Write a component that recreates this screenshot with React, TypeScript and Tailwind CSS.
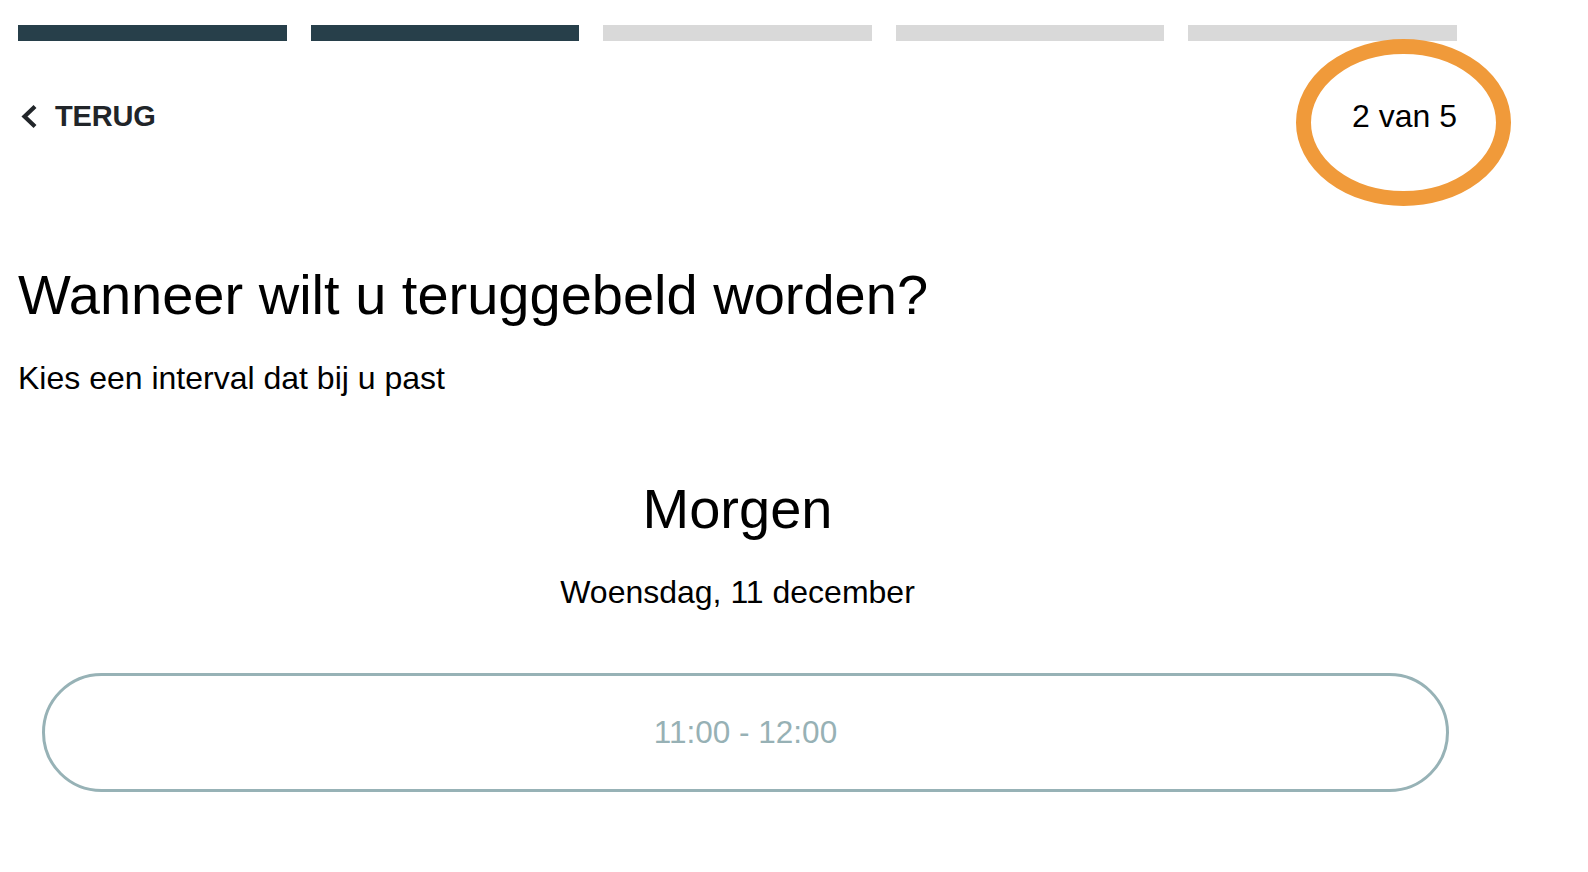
import React from "react";

export default function App() {
  const steps = [true, true, false, false, false];
  return (
    <div className="relative min-h-[872px] bg-white" style={{ fontFamily: '"Liberation Sans", Arial, sans-serif' }}>
      <div className="ml-[18px] w-[1439px] pt-[25px]">
        <div className="flex gap-[24px]">
          {steps.map((on, i) => (
            <div key={i} className={on ? "h-[16px] flex-1 bg-[#273f4a]" : "h-[16px] flex-1 bg-[#d9d9d9]"} />
          ))}
        </div>

        <div className="mt-[50px] flex h-[50px] items-center justify-between">
          <button className="flex items-center gap-[17px] pl-[3px] text-[#212529]">
            <svg width="17" height="25" viewBox="0 0 17 25" fill="none">
              <polyline points="14,2.5 3.5,12.5 14,22.5" stroke="#212529" strokeWidth="4.2" strokeLinecap="butt" strokeLinejoin="miter" />
            </svg>
            <span className="text-[29px] font-bold leading-none tracking-[-0.2px]">TERUG</span>
          </button>
          <span className="text-[32px] leading-none text-black">2 van 5</span>
        </div>

        <h1 className="mt-[126px] text-[56px] font-normal leading-none text-black">Wanneer wilt u teruggebeld worden?</h1>
        <p className="mt-[39px] text-[32px] leading-none text-black">Kies een interval dat bij u past</p>

        <div className="mt-[87px] text-center text-[56px] leading-none text-black">Morgen</div>
        <div className="mt-[39px] text-center text-[32px] leading-none text-black">Woensdag, 11 december</div>

        <div className="ml-[24px] mr-[8px] mt-[65px] flex h-[119px] items-center justify-center rounded-full border-[3px] border-[#97b2b6] pt-[1px] text-[31.5px] leading-none text-[#97b1b5]">
          11:00 - 12:00
        </div>
      </div>

      <svg className="pointer-events-none absolute left-[1296px] top-[39px]" width="215" height="167" viewBox="0 0 215 167">
        <ellipse cx="107.5" cy="83.5" rx="100" ry="76" fill="none" stroke="#f09a3a" strokeWidth="15" />
      </svg>
    </div>
  );
}
